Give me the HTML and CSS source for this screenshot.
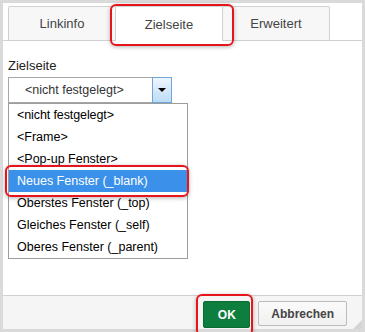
FILE: index.html
```html
<!DOCTYPE html>
<html lang="de">
<head>
  <meta charset="UTF-8">
  <title>Link — Zielseite</title>
  <link rel="stylesheet" href="styles.css">
</head>
<body>
  <div class="dialog">
    <div class="tabs">
      <div class="tab">Linkinfo</div>
      <div class="tab active">Zielseite</div>
      <div class="tab">Erweitert</div>
    </div>

    <div class="panel">
      <label class="field-label">Zielseite</label>
      <div class="field">
        <div class="select">
          <span class="select-value">&lt;nicht festgelegt&gt;</span>
          <span class="select-button"><span class="arrow"></span></span>
        </div>
        <ul class="options">
          <li class="tight">&lt;nicht festgelegt&gt;</li>
          <li>&lt;Frame&gt;</li>
          <li>&lt;Pop-up Fenster&gt;</li>
          <li class="selected">Neues Fenster (_blank)</li>
          <li>Oberstes Fenster (_top)</li>
          <li>Gleiches Fenster (_self)</li>
          <li>Oberes Fenster (_parent)</li>
        </ul>
      </div>
    </div>

    <div class="footer">
      <button class="btn btn-ok">OK</button>
      <button class="btn">Abbrechen</button>
      <svg class="grip" width="9" height="9" viewBox="0 0 9 9">
        <path d="M9 0 L9 9 L0 9 Z" fill="#d4d4d4"/>
      </svg>
    </div>
  </div>

  <!-- red callouts drawn over the screenshot -->
  <div class="mark mark-tab"></div>
  <div class="mark mark-item"></div>
  <div class="mark mark-ok"></div>
</body>
</html>
```

FILE: styles.css
```css
:root {
  --line: #d1d1d1;
  --frame: #dadada;
  --mark: #e8141b;
  --font: 'Liberation Sans', Arial, sans-serif;
}

html, body {
  margin: 0;
  padding: 0;
  background: #ffffff;
}

body {
  position: relative;
  width: 365px;
  height: 332px;
  overflow: hidden;
  font-family: var(--font);
}

.dialog {
  box-sizing: border-box;
  width: 365px;
  height: 332px;
  border: 3px solid var(--frame);
  display: flex;
  flex-direction: column;
  background: #ffffff;
}

/* tabs */
.tabs {
  box-sizing: border-box;
  height: 38px;
  padding: 3px 0 0 5px;
  display: flex;
  align-items: flex-start;
  border-bottom: 1px solid var(--line);
}

.tab {
  box-sizing: border-box;
  width: 108px;
  height: 34px;
  margin-right: -1px;
  border: 1px solid var(--line);
  border-bottom: 0;
  border-radius: 2px 2px 0 0;
  background: #f7f7f7;
  color: #444;
  font-size: 13px;
  display: flex;
  align-items: center;
  justify-content: center;
}

.tab.active {
  position: relative;
  z-index: 1;
  height: 35px;
  background: #ffffff;
}

/* panel */
.panel {
  flex: 1;
  padding: 17px 5px 0;
}

.field-label {
  display: block;
  font-size: 13px;
  line-height: 16px;
  color: #222;
  margin-bottom: 3px;
}

.field {
  position: relative;
}

.select {
  box-sizing: border-box;
  width: 164px;
  height: 26px;
  border: 1px solid #a8a8a8;
  display: flex;
  align-items: center;
  background: #ffffff;
}

.select-value {
  padding-left: 16px;
  font-size: 12.5px;
  color: #333;
}

.select-button {
  box-sizing: border-box;
  width: 20px;
  height: 26px;
  margin: -1px -1px -1px auto;
  border: 1px solid #6fa6dc;
  background: linear-gradient(#eef6fd, #bddcf5);
  display: flex;
  align-items: center;
  justify-content: center;
}

.arrow {
  width: 0;
  height: 0;
  border-left: 4px solid transparent;
  border-right: 4px solid transparent;
  border-top: 4px solid #000;
}

.options {
  position: absolute;
  top: 26px;
  left: 0;
  box-sizing: border-box;
  width: 180px;
  margin: 0;
  padding: 0;
  list-style: none;
  border: 1px solid #9c9c9c;
  background: #ffffff;
}

.options li {
  height: 22px;
  line-height: 22px;
  padding-left: 8px;
  font-size: 12.5px;
  color: #000;
  white-space: nowrap;
}

.options li.tight {
  letter-spacing: -0.1px;
}

.options li.selected {
  background: #3b91ea;
  color: #ffffff;
}

/* footer */
.footer {
  position: relative;
  box-sizing: border-box;
  height: 34px;
  border-top: 1px solid var(--line);
  background: #f5f5f5;
  display: flex;
  justify-content: flex-end;
  align-items: flex-start;
  gap: 8px;
  padding: 5px 15px 0 0;
}

.btn {
  box-sizing: border-box;
  height: 25px;
  padding: 0 12px;
  border: 1px solid #bcbcbc;
  border-radius: 2px;
  background: linear-gradient(#fafafa, #f1f1f1);
  font-family: var(--font);
  font-size: 12px;
  font-weight: bold;
  color: #444;
}

.btn-ok {
  height: 27px;
  width: 47px;
  padding: 0;
  border-color: #0a6b34;
  background: #0e7e3e;
  color: #ffffff;
}

.grip {
  position: absolute;
  right: 0;
  bottom: 0;
}

/* callouts */
.mark {
  position: absolute;
  box-sizing: border-box;
  border: 2px solid var(--mark);
  border-radius: 6px;
  box-shadow: 0 1px 4px rgba(0, 0, 0, 0.3);
}

.mark-tab {
  left: 110px;
  top: 4px;
  width: 124px;
  height: 42px;
}

.mark-item {
  left: 5px;
  top: 165px;
  width: 184px;
  height: 32px;
}

.mark-ok {
  left: 196px;
  top: 294px;
  width: 57px;
  height: 42px;
}
```
